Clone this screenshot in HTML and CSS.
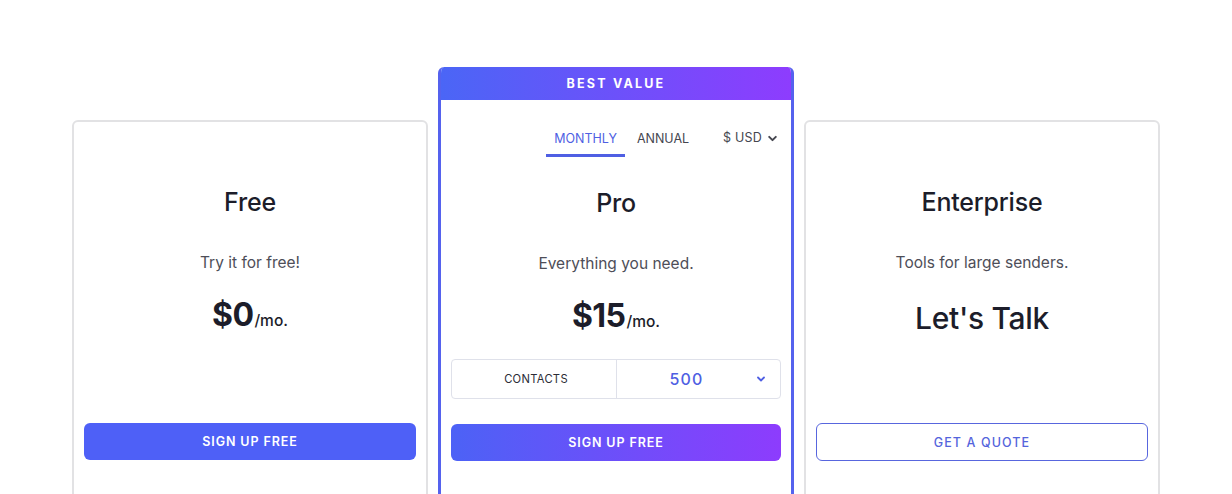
FILE: index.html
```html
<!DOCTYPE html>
<html lang="en">
<head>
<meta charset="utf-8">
<title>Pricing</title>
<link rel="stylesheet" href="styles.css">
</head>
<body>
<main class="pricing">
  <section class="card card--side">
    <h2 class="plan-title">Free</h2>
    <p class="plan-sub">Try it for free!</p>
    <div class="price"><span class="amount">$0</span><span class="per">/mo.</span></div>
    <div class="spacer"></div>
    <button class="btn btn--solid">SIGN UP FREE</button>
  </section>

  <section class="card card--pro">
    <div class="badge">BEST VALUE</div>
    <div class="pro-body">
      <div class="toggle-row">
        <div class="tabs">
          <span class="tab tab--active">MONTHLY</span>
          <span class="tab">ANNUAL</span>
        </div>
        <div class="currency">$ USD
          <svg class="chev" viewBox="0 0 10 10" width="11" height="11"><path d="M2 3.5 L5 6.5 L8 3.5" fill="none" stroke="currentColor" stroke-width="1.8" stroke-linecap="round" stroke-linejoin="round"/></svg>
        </div>
      </div>
      <h2 class="plan-title plan-title--pro">Pro</h2>
      <p class="plan-sub">Everything you need.</p>
      <div class="price"><span class="amount">$15</span><span class="per">/mo.</span></div>
      <div class="contacts">
        <div class="contacts-label">CONTACTS</div>
        <div class="contacts-value">
          <span class="num">500</span>
          <svg class="chev chev--blue" viewBox="0 0 10 10" width="10" height="10"><path d="M2 3.5 L5 6.5 L8 3.5" fill="none" stroke="currentColor" stroke-width="1.8" stroke-linecap="round" stroke-linejoin="round"/></svg>
        </div>
      </div>
      <button class="btn btn--gradient">SIGN UP FREE</button>
    </div>
  </section>

  <section class="card card--side">
    <h2 class="plan-title">Enterprise</h2>
    <p class="plan-sub">Tools for large senders.</p>
    <div class="price"><span class="talk">Let's Talk</span></div>
    <div class="spacer"></div>
    <button class="btn btn--outline">GET A QUOTE</button>
  </section>
</main>
</body>
</html>
```

FILE: styles.css
```css
* { box-sizing: border-box; }

html, body {
  margin: 0;
  background: #ffffff;
  height: 494px;
  overflow: hidden;
}

body {
  font-family: Inter, "Liberation Sans", sans-serif;
  color: #1c1d2a;
}

.pricing {
  display: flex;
  justify-content: center;
  align-items: flex-start;
  gap: 10px;
  padding-top: 67px;
}

.card {
  width: 356px;
  height: 480px;
  background: #fff;
  border-radius: 6px;
  text-align: center;
}

.card--side {
  margin-top: 53px;
  border: 2px solid #e2e2e4;
  padding: 64px 10px 0;
  display: flex;
  flex-direction: column;
}

.plan-title {
  margin: 0;
  font-size: 25px;
  line-height: 32px;
  font-weight: 500;
  letter-spacing: -0.2px;
}

.plan-sub {
  margin: 33px 0 0;
  font-size: 15.5px;
  line-height: 24px;
  color: #4e4e58;
}

.price {
  margin-top: 20px;
  height: 40px;
  display: flex;
  align-items: baseline;
  justify-content: center;
}

.amount {
  font-size: 32px;
  line-height: 40px;
  font-weight: 700;
  letter-spacing: -0.6px;
}

.per {
  font-size: 15.5px;
  font-weight: 500;
  margin-left: 1px;
}

.talk {
  font-size: 30px;
  line-height: 46px;
  font-weight: 500;
  letter-spacing: -0.3px;
}

.spacer { height: 88px; flex: none; }

.btn {
  display: block;
  width: 100%;
  height: 37px;
  border-radius: 6px;
  font-family: inherit;
  font-size: 12.5px;
  font-weight: 600;
  letter-spacing: 0.9px;
  cursor: pointer;
}

.btn--solid {
  border: none;
  background: #4e60f7;
  color: #fff;
}

.btn--gradient {
  border: none;
  background: linear-gradient(90deg, #4c62f6 0%, #8d3cfd 100%);
  color: #fff;
}

.btn--outline {
  height: 38px;
  background: #fff;
  border: 1px solid #5866de;
  color: #5464dc;
  font-weight: 500;
  letter-spacing: 1.1px;
}

/* Pro card */
.card--pro {
  border: 3px solid #5562ee;
  border-top: none;
  overflow: hidden;
}

.badge {
  height: 33px;
  margin: 0 -3px;
  line-height: 34px;
  background: linear-gradient(90deg, #4a66f6 0%, #8e3cfe 100%);
  color: #fff;
  font-size: 12.5px;
  font-weight: 700;
  letter-spacing: 2.2px;
  border-radius: 6px 6px 0 0;
}

.pro-body {
  padding: 21px 10px 0;
}

.toggle-row {
  display: flex;
  align-items: flex-start;
  justify-content: flex-end;
  padding-right: 3px;
}

.tabs {
  display: flex;
  gap: 4px;
}

.tab {
  display: block;
  padding: 10px 8px 7px;
  font-size: 12.5px;
  line-height: 16px;
  color: #45464f;
  border-bottom: 3px solid transparent;
}

.tab--active {
  color: #4f5fe3;
  border-bottom-color: #4f5fe3;
}

.currency {
  margin-left: 26px;
  padding-top: 9px;
  font-size: 12.5px;
  line-height: 16px;
  color: #45464f;
  letter-spacing: 0.2px;
  display: flex;
  align-items: center;
  gap: 5px;
}

.chev { display: block; color: #45464f; }
.chev--blue { color: #4f5fe3; }

.plan-title--pro {
  margin-top: 30px;
}

.contacts {
  margin-top: 23px;
  height: 40px;
  display: flex;
  border: 1px solid #dfe1ea;
  border-radius: 4px;
}

.contacts-label {
  width: 165px;
  border-right: 1px solid #dfe1ea;
  display: flex;
  align-items: center;
  justify-content: center;
  padding-left: 4px;
  font-size: 11.2px;
  color: #2b2c36;
  letter-spacing: 0.3px;
}

.contacts-value {
  flex: 1;
  position: relative;
  display: flex;
  align-items: center;
  justify-content: center;
}

.contacts-value .num {
  font-size: 16px;
  font-weight: 500;
  color: #4f5fe3;
  letter-spacing: 1.2px;
  margin-right: 24px;
}

.contacts-value .chev {
  position: absolute;
  right: 14px;
  top: 14px;
}

.card--pro .btn {
  margin-top: 25px;
}
```
